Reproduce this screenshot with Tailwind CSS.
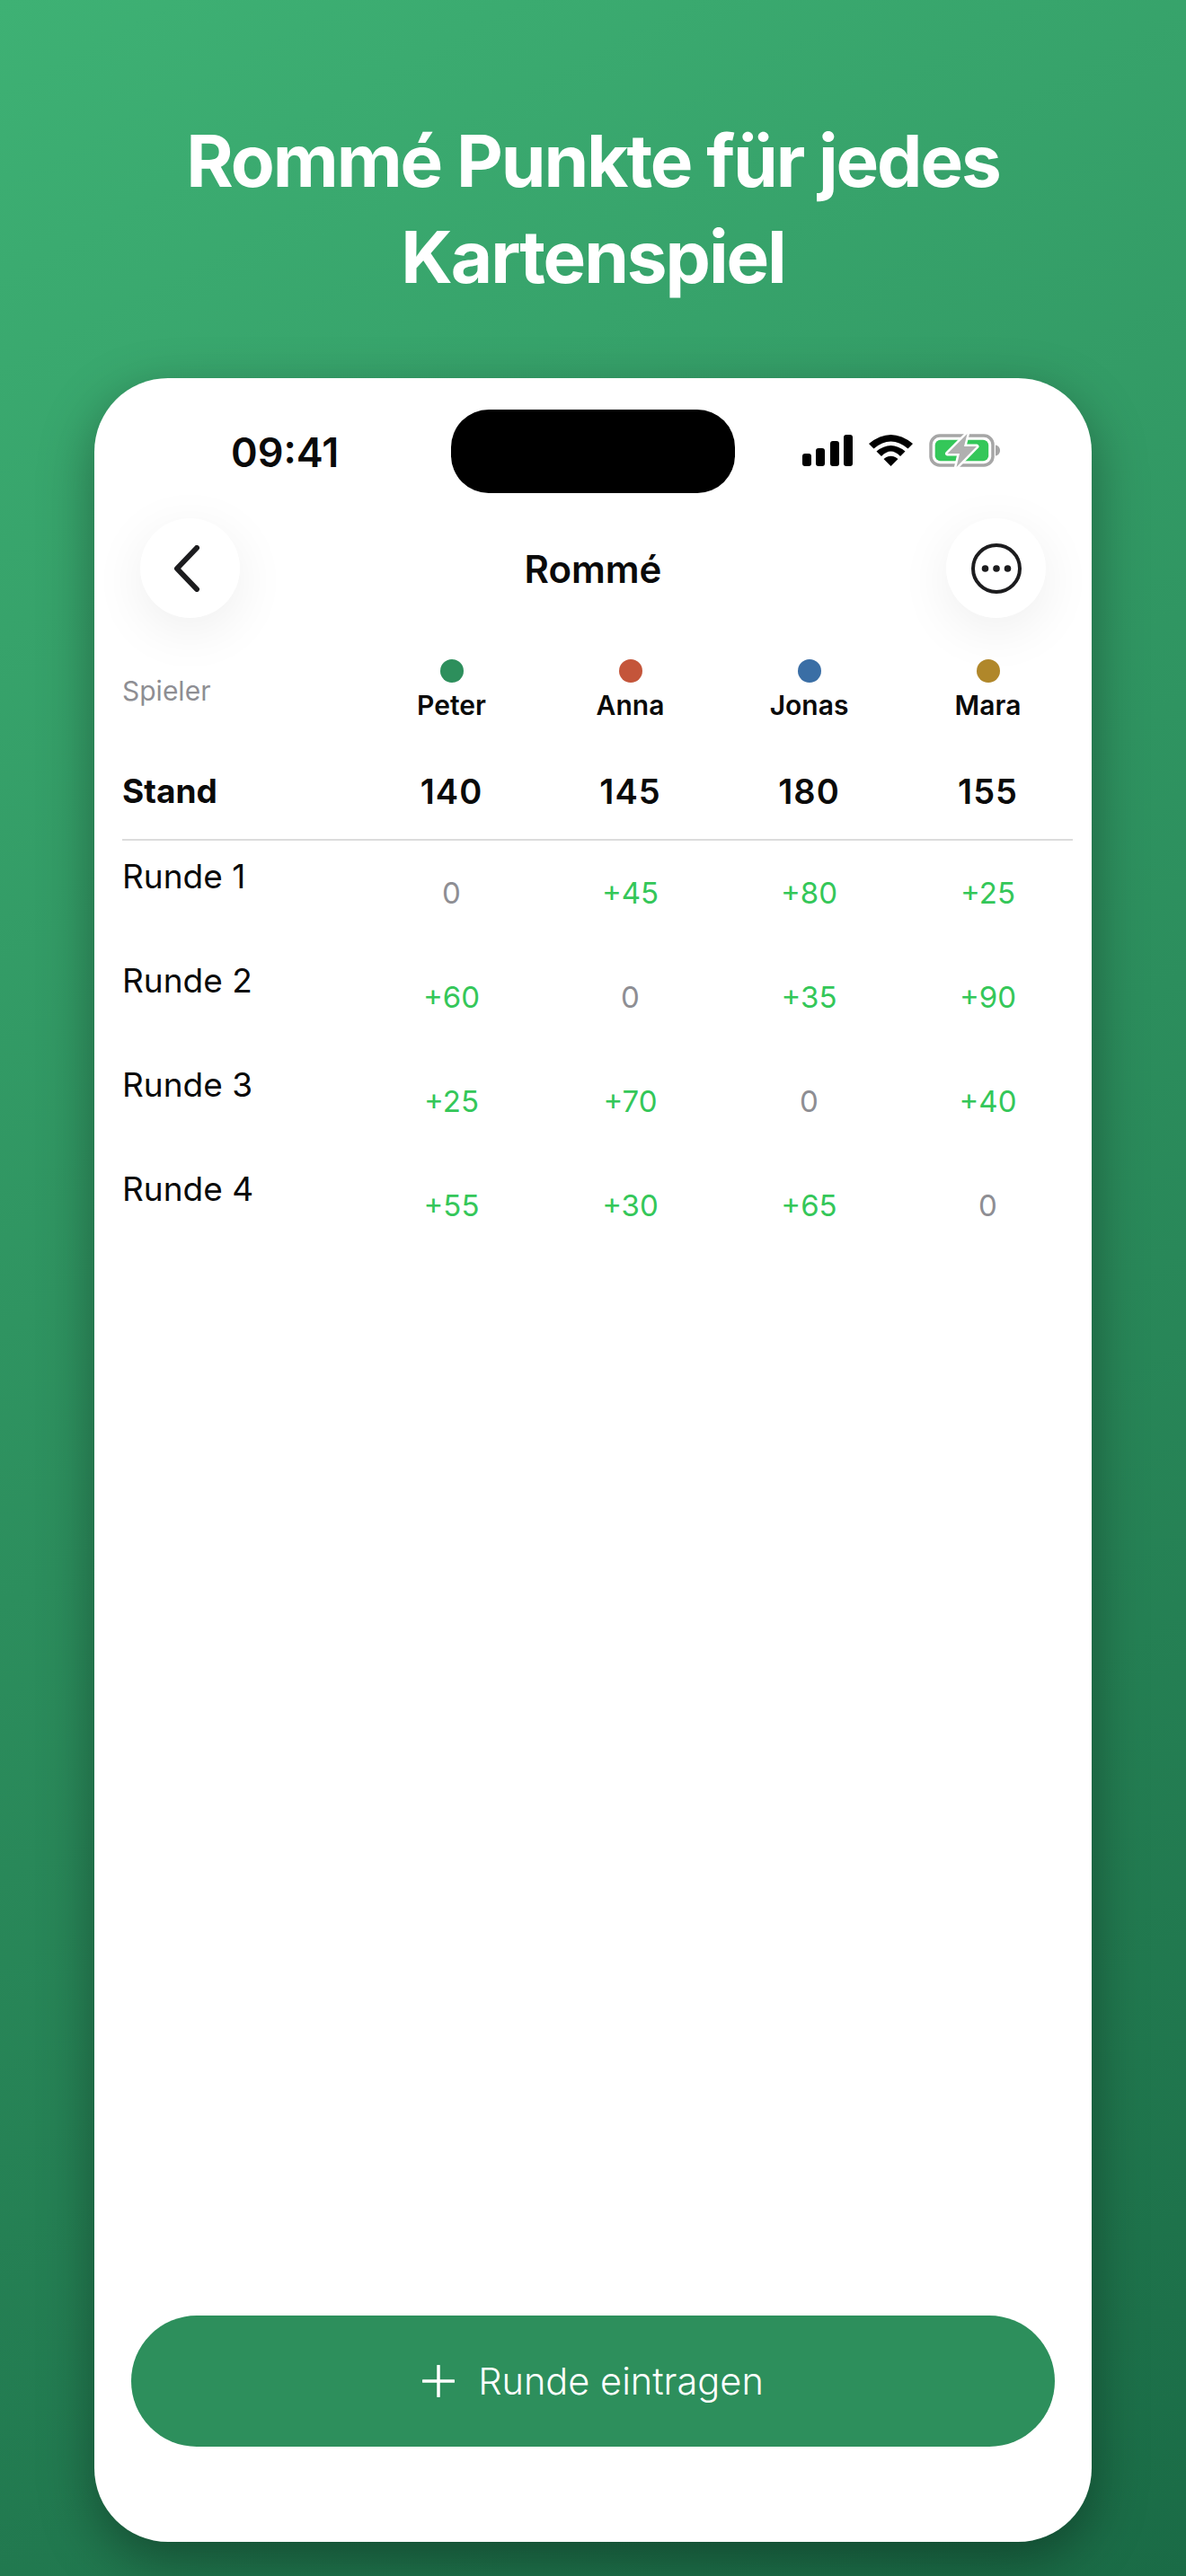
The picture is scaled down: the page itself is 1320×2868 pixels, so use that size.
<!DOCTYPE html>
<html lang="de">
<head>
  <meta charset="UTF-8" />
  <meta name="viewport" content="width=device-width, initial-scale=1" />
  <title>Rommé Punkte</title>
  <script src="https://cdn.jsdelivr.net/npm/@tailwindcss/browser@4"></script>
</head>
<body class="font-['Inter',sans-serif]">
  <div class="w-[1320px] h-[2868px] bg-[linear-gradient(152deg,#3eb174_0%,#1a6b46_100%)] flex flex-col items-center overflow-hidden">

    <!-- Headline -->
    <h1 class="pt-[125px] h-[421px] text-center text-white text-[80px] leading-[107px] font-bold tracking-[-2.1px]">
      Rommé Punkte für jedes<br />Kartenspiel
    </h1>

    <!-- Phone card -->
    <div class="relative w-[1110px] h-[2409px] bg-white rounded-[82px] shadow-[0_20px_60px_rgba(0,0,0,0.36)] flex flex-col">

      <!-- Notch -->
      <div class="absolute left-[397px] top-[35px] w-[316px] h-[93px] bg-black rounded-[42px]"></div>

      <!-- Status bar -->
      <div class="h-[156px] pl-[152px] pr-[102px] flex items-start justify-between">
        <span class="mt-[56px] text-[45px] leading-[53px] font-semibold text-[#0a0a0a]">09:41</span>
        <div class="mt-[63px] flex items-start">
          <svg width="56" height="35" viewBox="0 0 56 35" class="mr-[18px]">
            <rect x="0" y="21" width="10" height="14" rx="3" />
            <rect x="15" y="15" width="10" height="20" rx="3" />
            <rect x="31" y="7" width="10" height="28" rx="3" />
            <rect x="46" y="0" width="10" height="35" rx="3" />
          </svg>
          <svg width="49" height="35" viewBox="0 0 49 35" class="mr-[18px]">
            <path d="M0 10Q24.500 -10 49 10L43.500 15.500Q24.500 -0.500 5.500 15.500Z" />
            <path d="M8.500 18.500Q24.500 5.500 40.500 18.500L35 24Q24.500 13 14 24Z" />
            <path d="M16.500 27Q24.500 20.500 32.500 27L24.500 35Z" />
          </svg>
          <svg width="79" height="37" viewBox="0 0 79 37" class="-mt-[1px]">
            <rect x="2" y="2" width="69" height="33" rx="10" fill="none" stroke="#a6a6a6" stroke-width="3.500" />
            <path d="M74 12.500C77 13 79 15.500 79 18.500S77 24 74 24.500Z" fill="#a6a6a6" />
            <rect x="6.700" y="6.700" width="59.500" height="23.500" rx="6" fill="#34c759" />
            <path d="M42.500 0L20.500 22H34L30.500 37L53 14H39Z" fill="#b0b0b0" stroke="#fff" stroke-width="5" stroke-linejoin="round" paint-order="stroke" />
          </svg>
        </div>
      </div>

      <!-- Nav -->
      <div class="h-[111px] pl-[51px] pr-[51px] flex items-center justify-between">
        <button class="w-[111px] h-[111px] rounded-full bg-white shadow-[0_14px_60px_rgba(0,0,0,0.07)] flex items-center justify-center">
          <svg width="34" height="52" viewBox="0 0 34 52" fill="none" stroke="#1c1c1e" stroke-width="6" stroke-linecap="round" stroke-linejoin="round" class="-ml-[5px]">
            <path d="M27 3L5 26L27 49" />
          </svg>
        </button>
        <span class="text-[42px] leading-[50px] font-semibold text-[#0a0a0a] translate-y-[1px]">Rommé</span>
        <button class="w-[111px] h-[111px] rounded-full bg-white shadow-[0_14px_60px_rgba(0,0,0,0.07)] flex items-center justify-center">
          <svg width="56" height="56" viewBox="0 0 56 56" fill="#1c1c1e">
            <circle cx="28" cy="28" r="26" fill="none" stroke="#1c1c1e" stroke-width="4" />
            <circle cx="15.500" cy="28" r="3.800" />
            <circle cx="28" cy="28" r="3.800" />
            <circle cx="40.500" cy="28" r="3.800" />
          </svg>
        </button>
      </div>

      <!-- Score table -->
      <div class="pl-[31px] pr-[15px]">
        <div class="grid grid-cols-[267px_repeat(4,199px)] pt-[46px] h-[145px]">
          <div class="pt-[17px] text-[30px] leading-[36px] text-[#8e8e93]">Spieler</div>
          <div class="flex flex-col items-center"><span class="w-[26px] h-[26px] rounded-full bg-[#2d8f5c]"></span><span class="mt-[7px] text-[30px] leading-[36px] font-semibold text-[#0a0a0a]">Peter</span></div>
          <div class="flex flex-col items-center"><span class="w-[26px] h-[26px] rounded-full bg-[#c4553a]"></span><span class="mt-[7px] text-[30px] leading-[36px] font-semibold text-[#0a0a0a]">Anna</span></div>
          <div class="flex flex-col items-center"><span class="w-[26px] h-[26px] rounded-full bg-[#3a6ea5]"></span><span class="mt-[7px] text-[30px] leading-[36px] font-semibold text-[#0a0a0a]">Jonas</span></div>
          <div class="flex flex-col items-center"><span class="w-[26px] h-[26px] rounded-full bg-[#b0872a]"></span><span class="mt-[7px] text-[30px] leading-[36px] font-semibold text-[#0a0a0a]">Mara</span></div>
        </div>
        <div class="grid grid-cols-[267px_repeat(4,199px)] items-center h-[101px] pb-[6px] text-[37px] leading-[44px] font-bold text-[#0a0a0a]">
          <div>Stand</div>
          <div class="text-center font-semibold text-[38px] tracking-[1px]">140</div>
          <div class="text-center font-semibold text-[38px] tracking-[1px]">145</div>
          <div class="text-center font-semibold text-[38px] tracking-[1px]">180</div>
          <div class="text-center font-semibold text-[38px] tracking-[1px]">155</div>
        </div>
        <div class="h-[2px] bg-[#dcdcdc] mr-[6px]"></div>

        <div class="grid grid-cols-[267px_repeat(4,199px)] h-[116px] pt-[18px] text-[33px] leading-[41px] text-[#34c759]">
          <div class="text-[37px] leading-[44px] text-[#0a0a0a]">Runde 1</div>
          <div class="mt-[20px] text-center text-[#8e8e93]">0</div>
          <div class="mt-[20px] text-center">+45</div>
          <div class="mt-[20px] text-center">+80</div>
          <div class="mt-[20px] text-center">+25</div>
        </div>
        <div class="grid grid-cols-[267px_repeat(4,199px)] h-[116px] pt-[18px] text-[33px] leading-[41px] text-[#34c759]">
          <div class="text-[37px] leading-[44px] text-[#0a0a0a]">Runde 2</div>
          <div class="mt-[20px] text-center">+60</div>
          <div class="mt-[20px] text-center text-[#8e8e93]">0</div>
          <div class="mt-[20px] text-center">+35</div>
          <div class="mt-[20px] text-center">+90</div>
        </div>
        <div class="grid grid-cols-[267px_repeat(4,199px)] h-[116px] pt-[18px] text-[33px] leading-[41px] text-[#34c759]">
          <div class="text-[37px] leading-[44px] text-[#0a0a0a]">Runde 3</div>
          <div class="mt-[20px] text-center">+25</div>
          <div class="mt-[20px] text-center">+70</div>
          <div class="mt-[20px] text-center text-[#8e8e93]">0</div>
          <div class="mt-[20px] text-center">+40</div>
        </div>
        <div class="grid grid-cols-[267px_repeat(4,199px)] h-[116px] pt-[18px] text-[33px] leading-[41px] text-[#34c759]">
          <div class="text-[37px] leading-[44px] text-[#0a0a0a]">Runde 4</div>
          <div class="mt-[20px] text-center">+55</div>
          <div class="mt-[20px] text-center">+30</div>
          <div class="mt-[20px] text-center">+65</div>
          <div class="mt-[20px] text-center text-[#8e8e93]">0</div>
        </div>
      </div>

      <!-- Add round button -->
      <div class="mt-auto mb-[106px] mx-[41px]">
        <button class="w-full h-[146px] rounded-[73px] bg-[#2d8f5c] flex items-center justify-center text-white text-[41.5px] leading-[48px] font-[350]">
          <svg width="36" height="36" viewBox="0 0 36 36" stroke="#fff" stroke-width="3.500" stroke-linecap="round" class="mr-[26px]">
            <path d="M18 1V35M1 18H35" />
          </svg>
          Runde eintragen
        </button>
      </div>
    </div>
  </div>
</body>
</html>
